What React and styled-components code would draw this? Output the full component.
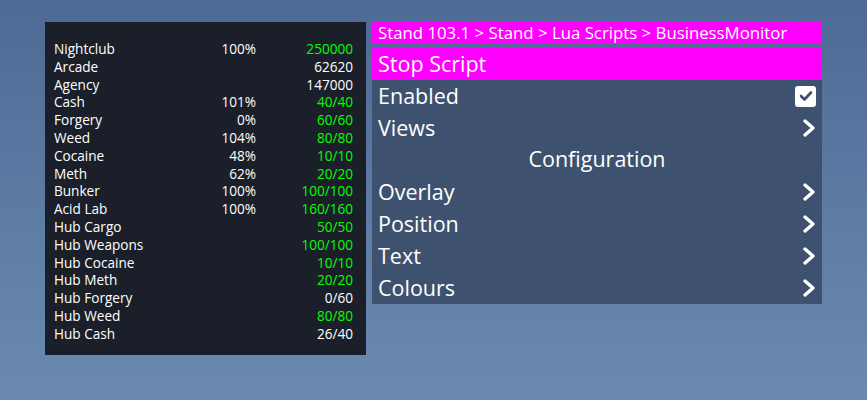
import React from 'react'
import styled, { createGlobalStyle } from 'styled-components';

const GlobalStyle = createGlobalStyle`
  html, body {
    margin: 0;
    height: 100%;
  }
  body {
    background: linear-gradient(180deg, #4d6a95 0%, #5f7ea6 60%, #6a8ab0 100%);
    font-family: "Open Sans", "Noto Sans", sans-serif;
    color: #ffffff;
    overflow: hidden;
  }
`;

const rows = [
  { name: 'Nightclub', pct: '100%', value: '250000', ok: true },
  { name: 'Arcade', pct: '', value: '62620', ok: false },
  { name: 'Agency', pct: '', value: '147000', ok: false },
  { name: 'Cash', pct: '101%', value: '40/40', ok: true },
  { name: 'Forgery', pct: '0%', value: '60/60', ok: true },
  { name: 'Weed', pct: '104%', value: '80/80', ok: true },
  { name: 'Cocaine', pct: '48%', value: '10/10', ok: true },
  { name: 'Meth', pct: '62%', value: '20/20', ok: true },
  { name: 'Bunker', pct: '100%', value: '100/100', ok: true },
  { name: 'Acid Lab', pct: '100%', value: '160/160', ok: true },
  { name: 'Hub Cargo', pct: '', value: '50/50', ok: true },
  { name: 'Hub Weapons', pct: '', value: '100/100', ok: true },
  { name: 'Hub Cocaine', pct: '', value: '10/10', ok: true },
  { name: 'Hub Meth', pct: '', value: '20/20', ok: true },
  { name: 'Hub Forgery', pct: '', value: '0/60', ok: false },
  { name: 'Hub Weed', pct: '', value: '80/80', ok: true },
  { name: 'Hub Cash', pct: '', value: '26/40', ok: false },
];

const Chevron = () => (
  <svg width="14" height="20" viewBox="0 0 14 20">
    <polyline points="3,3 11,10 3,17" fill="none" stroke="#fff" strokeWidth="3.4" strokeLinecap="round" strokeLinejoin="round" />
  </svg>
);

const Check = () => (
  <CheckBox>
    <svg width="14" height="12" viewBox="0 0 14 12">
      <polyline points="2,6 5.5,9.5 12,2.5" fill="none" stroke="#3d506b" strokeWidth="2.6" strokeLinecap="round" strokeLinejoin="round" />
    </svg>
  </CheckBox>
);

const App = () => {
  return (
    <>
      <GlobalStyle />
      <Page>
        <Overlay>
          {rows.map(r => (
            <StatRow key={r.name}>
              <span>{r.name}</span>
              <Pct>{r.pct}</Pct>
              <Value $ok={r.ok}>{r.value}</Value>
            </StatRow>
          ))}
        </Overlay>
        <Menu>
          <Breadcrumb>Stand 103.1 &gt; Stand &gt; Lua Scripts &gt; BusinessMonitor</Breadcrumb>
          <List>
            <Item $active>Stop Script</Item>
            <Item>Enabled<Check /></Item>
            <Item>Views<Chevron /></Item>
            <Divider>Configuration</Divider>
            <Item>Overlay<Chevron /></Item>
            <Item>Position<Chevron /></Item>
            <Item>Text<Chevron /></Item>
            <Item>Colours<Chevron /></Item>
          </List>
        </Menu>
      </Page>
    </>
  )
}

export default App;

const Page = styled.div`
  display: flex;
  align-items: flex-start;
  gap: 6px;
  padding: 21px 0 0 45px;
`;

const Overlay = styled.div`
  width: 321px;
  box-sizing: border-box;
  margin-top: 1px;
  padding: 18px 13px 12px 9px;
  background: #1a1f2a;
  font-size: 13.6px;
`;

const StatRow = styled.div`
  display: grid;
  grid-template-columns: 1fr 90px 97px;
  height: 17.8px;
  line-height: 17.8px;
  white-space: nowrap;
`;

const Pct = styled.span`
  text-align: right;
`;

const Value = styled.span`
  text-align: right;
  color: ${p => (p.$ok ? '#00ff00' : '#ffffff')};
`;

const Menu = styled.div`
  width: 450px;
  display: flex;
  flex-direction: column;
  gap: 4px;
`;

const Breadcrumb = styled.div`
  height: 23px;
  line-height: 24px;
  padding-left: 6px;
  background: #ff00ff;
  font-size: 16.8px;
  white-space: nowrap;
`;

const List = styled.div`
  background: #3e526f;
`;

const Item = styled.div`
  height: 32px;
  line-height: 30px;
  display: flex;
  align-items: center;
  justify-content: space-between;
  padding: 0 6px 0 6px;
  font-size: 21.5px;
  background: ${p => (p.$active ? '#ff00ff' : 'transparent')};
`;

const Divider = styled.div`
  height: 32px;
  line-height: 30px;
  text-align: center;
  font-size: 21.5px;
`;

const CheckBox = styled.div`
  width: 21px;
  height: 21px;
  border-radius: 3px;
  background: #ffffff;
  display: flex;
  align-items: center;
  justify-content: center;
`;
